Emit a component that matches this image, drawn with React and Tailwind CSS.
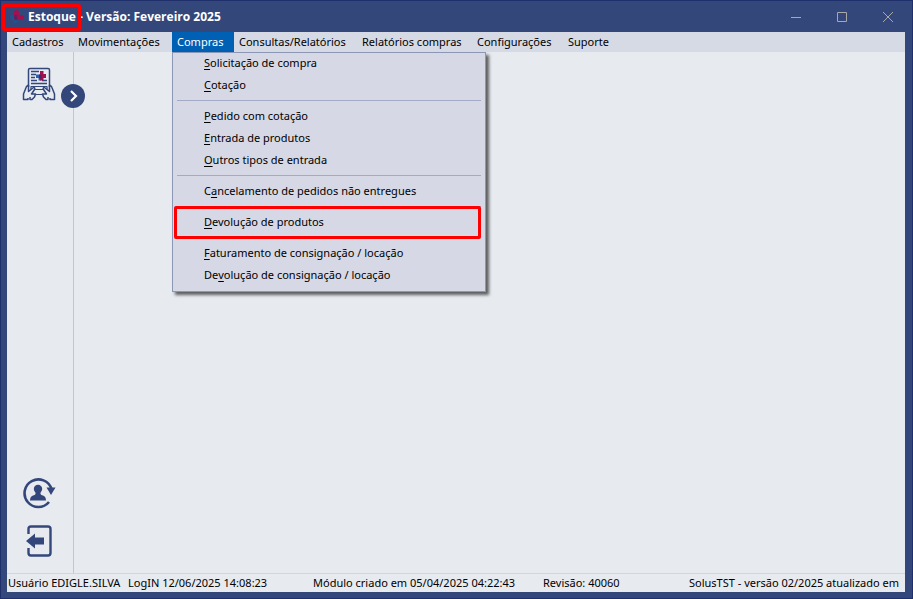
import React, { useState } from 'react';

const MENUS = [
  { label: 'Cadastros', width: 'w-[66px]' },
  { label: 'Movimentações', width: 'w-[99px]' },
  { label: 'Compras', width: 'w-[62px]' },
  { label: 'Consultas/Relatórios', width: 'w-[123px]' },
  { label: 'Relatórios compras', width: 'w-[115px]' },
  { label: 'Configurações', width: 'w-[91px]' },
  { label: 'Suporte', width: 'w-[56px]' },
];

// key is the position of the underlined access letter
const COMPRAS = [
  [
    { label: 'Solicitação de compra', key: 0 },
    { label: 'Cotação', key: 0 },
  ],
  [
    { label: 'Pedido com cotação', key: 0 },
    { label: 'Entrada de produtos', key: 0 },
    { label: 'Outros tipos de entrada', key: 0 },
  ],
  [{ label: 'Cancelamento de pedidos não entregues', key: 1 }],
  [{ label: 'Devolução de produtos', key: 0, marked: true }],
  [
    { label: 'Faturamento de consignação / locação', key: 0 },
    { label: 'Devolução de consignação / locação', key: 2 },
  ],
];

function CrossLogo() {
  return (
    <svg width="16" height="16" viewBox="0 0 16 16">
      <path d="M1 8q0-2 2-2h5v7q0 2-2 2t-2-2v-2H3q-2 0-2-3z" fill="#24508f" />
      <path d="M5 3q0-2 2.500-2T10 3v3h3q2 0 2 2.500T13 11H7q-2 0-2-3z" fill="#a3104f" />
      <path d="M5 6h3v5H7q-2 0-2-3z" fill="#5a2461" />
    </svg>
  );
}

function RequestIcon() {
  return (
    <svg width="34" height="34" viewBox="0 0 34 34" fill="none" stroke="#33477b" strokeWidth="1.500" strokeLinejoin="round">
      <path d="M6.500 20V3q0-1.500 1.500-1.500h18q1.500 0 1.500 1.500v17" />
      <path d="M9 4.500h8M9 7.500h5M9 10.500h4M9 13.500h6M9 16.500h16M20 13.500h5" strokeWidth="1.300" />
      <path d="M9 19.500h16v8H9zM9 22.500h16" strokeWidth="1.200" />
      <path d="M6.500 18Q4 19 3.500 22L1.500 27v5.500h4.500V31M6.500 18v6.500l5-4q2 0 1 2l-3 4.500h4l-1 3-2.500 2.500H8V30" fill="#e7eaef" />
      <path d="M27.500 18q2.500 1 3 4l2 5v5.500H28V31M27.500 18v6.500l-5-4q-2 0-1 2l3 4.500h-4l1 3 2.500 2.500H26V30" fill="#e7eaef" />
      <path d="M14 7.500h5v6h-2.500v-2.500H14z" fill="#2b62b0" stroke="none" />
      <path d="M18 4h3.500v3H24v4h-2.500v2.500H18z" fill="#a3104f" stroke="none" />
      <path d="M17 7.500h2.500v4H17z" fill="#4b2461" stroke="none" />
    </svg>
  );
}

function SwitchUserIcon() {
  return (
    <svg width="34" height="32" viewBox="0 0 34 32">
      <path d="M29.500 11A13.800 13.800 0 1 0 27 24" fill="none" stroke="#33477b" strokeWidth="2.600" />
      <path d="M24.500 9.500h9l-4.500 7.500z" fill="#33477b" />
      <circle cx="16" cy="11" r="4.200" fill="#33477b" />
      <path d="M13.500 13h5v3q.5 1 2.500 1.500 3 1 3 5H8q0-4 3-5 2-.5 2.500-1.500z" fill="#33477b" />
    </svg>
  );
}

function ExitIcon() {
  return (
    <svg width="34" height="34" viewBox="0 0 34 34">
      <path d="M6.500 10V5q0-2.500 2.500-2.500h17q2.500 0 2.500 2.500v24q0 2.500-2.500 2.500H9q-2.500 0-2.500-2.500v-5" fill="none" stroke="#33477b" strokeWidth="2.400" />
      <path d="M4 17l9-7.500v4h9v7h-9v4z" fill="#33477b" />
    </svg>
  );
}

function MenuItem({ item }) {
  const { label, key, marked } = item;
  return (
    <li className="relative">
      <button type="button" role="menuitem" className="flex h-[22px] w-full items-center pl-8 text-left whitespace-pre hover:bg-[#c3c9de]">
        {label.slice(0, key)}
        <span className="underline underline-offset-2">{label[key]}</span>
        {label.slice(key + 1)}
      </button>
      {marked && (
        <span className="pointer-events-none absolute -top-[5px] right-[5px] -bottom-[6px] left-[2px] z-10 rounded-xs border-3 border-[#fe0000]" />
      )}
    </li>
  );
}

function Dropdown() {
  return (
    <div role="menu" className="absolute top-full left-0 z-20 w-[314px] bg-[#d6d8e5] pb-[6px] text-black shadow-[3px_3px_3px_rgba(0,0,0,0.6)]">
      <div className="pointer-events-none absolute inset-0 border border-[#8c96b5]" />
      {COMPRAS.map((group, index) => (
        <React.Fragment key={index}>
          {index > 0 && <hr className="mx-[5px] my-1 border-t border-[#a4aac6]" />}
          <ul>
            {group.map((item) => (
              <MenuItem key={item.label} item={item} />
            ))}
          </ul>
        </React.Fragment>
      ))}
    </div>
  );
}

function TitleBar() {
  return (
    <header className="-mr-[6px] flex h-[31px] shrink-0 items-center text-[#fff]">
      <div className="relative flex items-center pl-0.5">
        <CrossLogo />
        <h1 className="pl-[3px] font-['Open_Sans','Noto_Sans',sans-serif] text-[12px] font-bold whitespace-pre">Estoque - Versão: Fevereiro 2025</h1>
        <span className="pointer-events-none absolute -top-[5px] -left-[5px] h-[27px] w-[79px] rounded-xs border-3 border-[#fe0000]" />
      </div>
      <div className="ml-auto flex h-full text-[#a9a9a9]">
        <button type="button" aria-label="Minimizar" className="flex w-[46px] items-center justify-center">
          <svg width="10" height="10"><path d="M0 5.500h10" stroke="currentColor" /></svg>
        </button>
        <button type="button" aria-label="Maximizar" className="flex w-[46px] items-center justify-center">
          <svg width="10" height="10"><path d="M.5.500h9v9h-9z" fill="none" stroke="currentColor" /></svg>
        </button>
        <button type="button" aria-label="Fechar" className="flex w-[46px] items-center justify-center">
          <svg width="10" height="10"><path d="M0 0l10 10M10 0L0 10" stroke="currentColor" /></svg>
        </button>
      </div>
    </header>
  );
}

export default function App() {
  const [open, setOpen] = useState('Compras');

  return (
    <div className="flex h-screen flex-col overflow-hidden border border-[#1f2f6b] bg-[#33477b] pr-[7px] pb-[6px] pl-[6px] font-['Noto_Sans','Open_Sans',sans-serif] text-[11px] leading-4 text-black">
      <TitleBar />
      <nav className="flex h-5 shrink-0 bg-[#d6dae5]">
        {MENUS.map(({ label, width }) => (
          <div key={label} className={`relative ${width}`}>
            <button
              type="button"
              onClick={() => setOpen(open === label ? null : label)}
              className={`flex h-full w-full items-center pl-[5px] whitespace-nowrap ${open === label ? 'bg-[#0060b4] text-white' : ''}`}
            >
              {label}
            </button>
            {label === 'Compras' && open === label && <Dropdown />}
          </div>
        ))}
      </nav>
      <div className="flex min-h-0 flex-1 bg-[#e7eaef]">
        <aside className="relative flex w-[67px] flex-col border-r border-[#c3c6cc] pt-[15px] pb-[15px] pl-[15px]">
          <button type="button" aria-label="Solicitações" className="w-[34px]">
            <RequestIcon />
          </button>
          <button type="button" aria-label="Expandir" className="absolute top-8 -right-3 flex size-6 items-center justify-center rounded-full bg-[#33477b]">
            <svg width="12" height="12" viewBox="0 0 12 12"><path d="M4 1L9 6 4 11" fill="none" stroke="#fff" strokeWidth="2.200" /></svg>
          </button>
          <div className="mt-auto flex flex-col gap-[14px]">
            <button type="button" aria-label="Trocar usuário" className="w-[34px]">
              <SwitchUserIcon />
            </button>
            <button type="button" aria-label="Sair" className="w-[34px]">
              <ExitIcon />
            </button>
          </div>
        </aside>
        <main className="flex-1" />
      </div>
      <footer className="flex h-[19px] shrink-0 items-center overflow-hidden border-t border-[#d0d5e2] bg-[#e7eaef] pl-px whitespace-nowrap">
        <span className="w-[120px] shrink-0">Usuário EDIGLE.SILVA</span>
        <span className="w-[185px] shrink-0">LogIN 12/06/2025 14:08:23</span>
        <span className="w-[230px] shrink-0">Módulo criado em 05/04/2025 04:22:43</span>
        <span className="w-[146px] shrink-0">Revisão: 40060</span>
        <span>SolusTST - versão 02/2025 atualizado em</span>
      </footer>
    </div>
  );
}
